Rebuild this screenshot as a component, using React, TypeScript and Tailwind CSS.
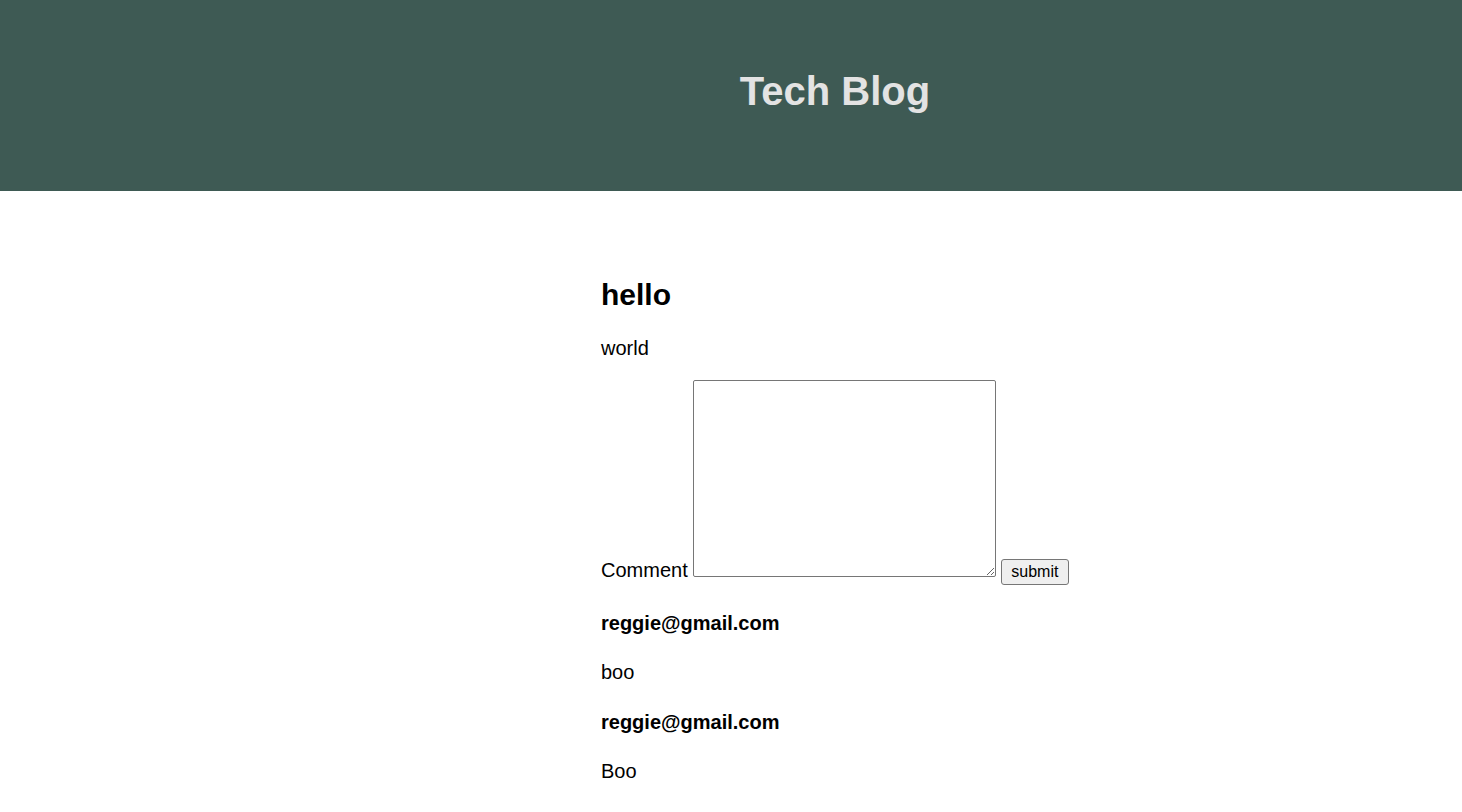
const FONT = "font-['Liberation_Sans',Arial,sans-serif]"

const COMMENTS = [
  { author: 'reggie@gmail.com', body: 'boo' },
  { author: 'reggie@gmail.com', body: 'Boo' },
]

export default function App() {
  return (
    <div className={`min-h-screen bg-white text-black ${FONT}`}>
      <header className="flex h-[191px] items-center justify-center bg-[#3e5a54] pb-[10px] pl-[208px]">
        <h1 className="text-[40px] font-bold leading-[46px] text-[#e3e3e3]">Tech Blog</h1>
      </header>

      <main className="pl-[601px] pb-10">
        <h2 className="pt-[87px] text-[30px] font-bold leading-[34px]">hello</h2>
        <p className="mt-[25px] text-[20px] leading-[23px]">world</p>

        <form
          className="mt-[20px] text-[20px] leading-[23px]"
          onSubmit={(e) => e.preventDefault()}
        >
          <label htmlFor="comment">Comment</label>{' '}
          <textarea
            id="comment"
            className="h-[197px] w-[303px] rounded-[2px] border border-[#767676] bg-white font-mono text-[13px]"
          />{' '}
          <button
            type="submit"
            className="-ml-px h-[26px] w-[68px] rounded-[3px] border border-[#767676] bg-[#efefef] text-center text-[16px] leading-[18px] text-black"
          >
            submit
          </button>
        </form>

        {COMMENTS.map((c, i) => (
          <div key={i}>
            <h4 className="mt-[27px] text-[20px] font-bold leading-[23px]">{c.author}</h4>
            <p className="mt-[26px] text-[20px] leading-[23px]">{c.body}</p>
          </div>
        ))}
      </main>
    </div>
  )
}
